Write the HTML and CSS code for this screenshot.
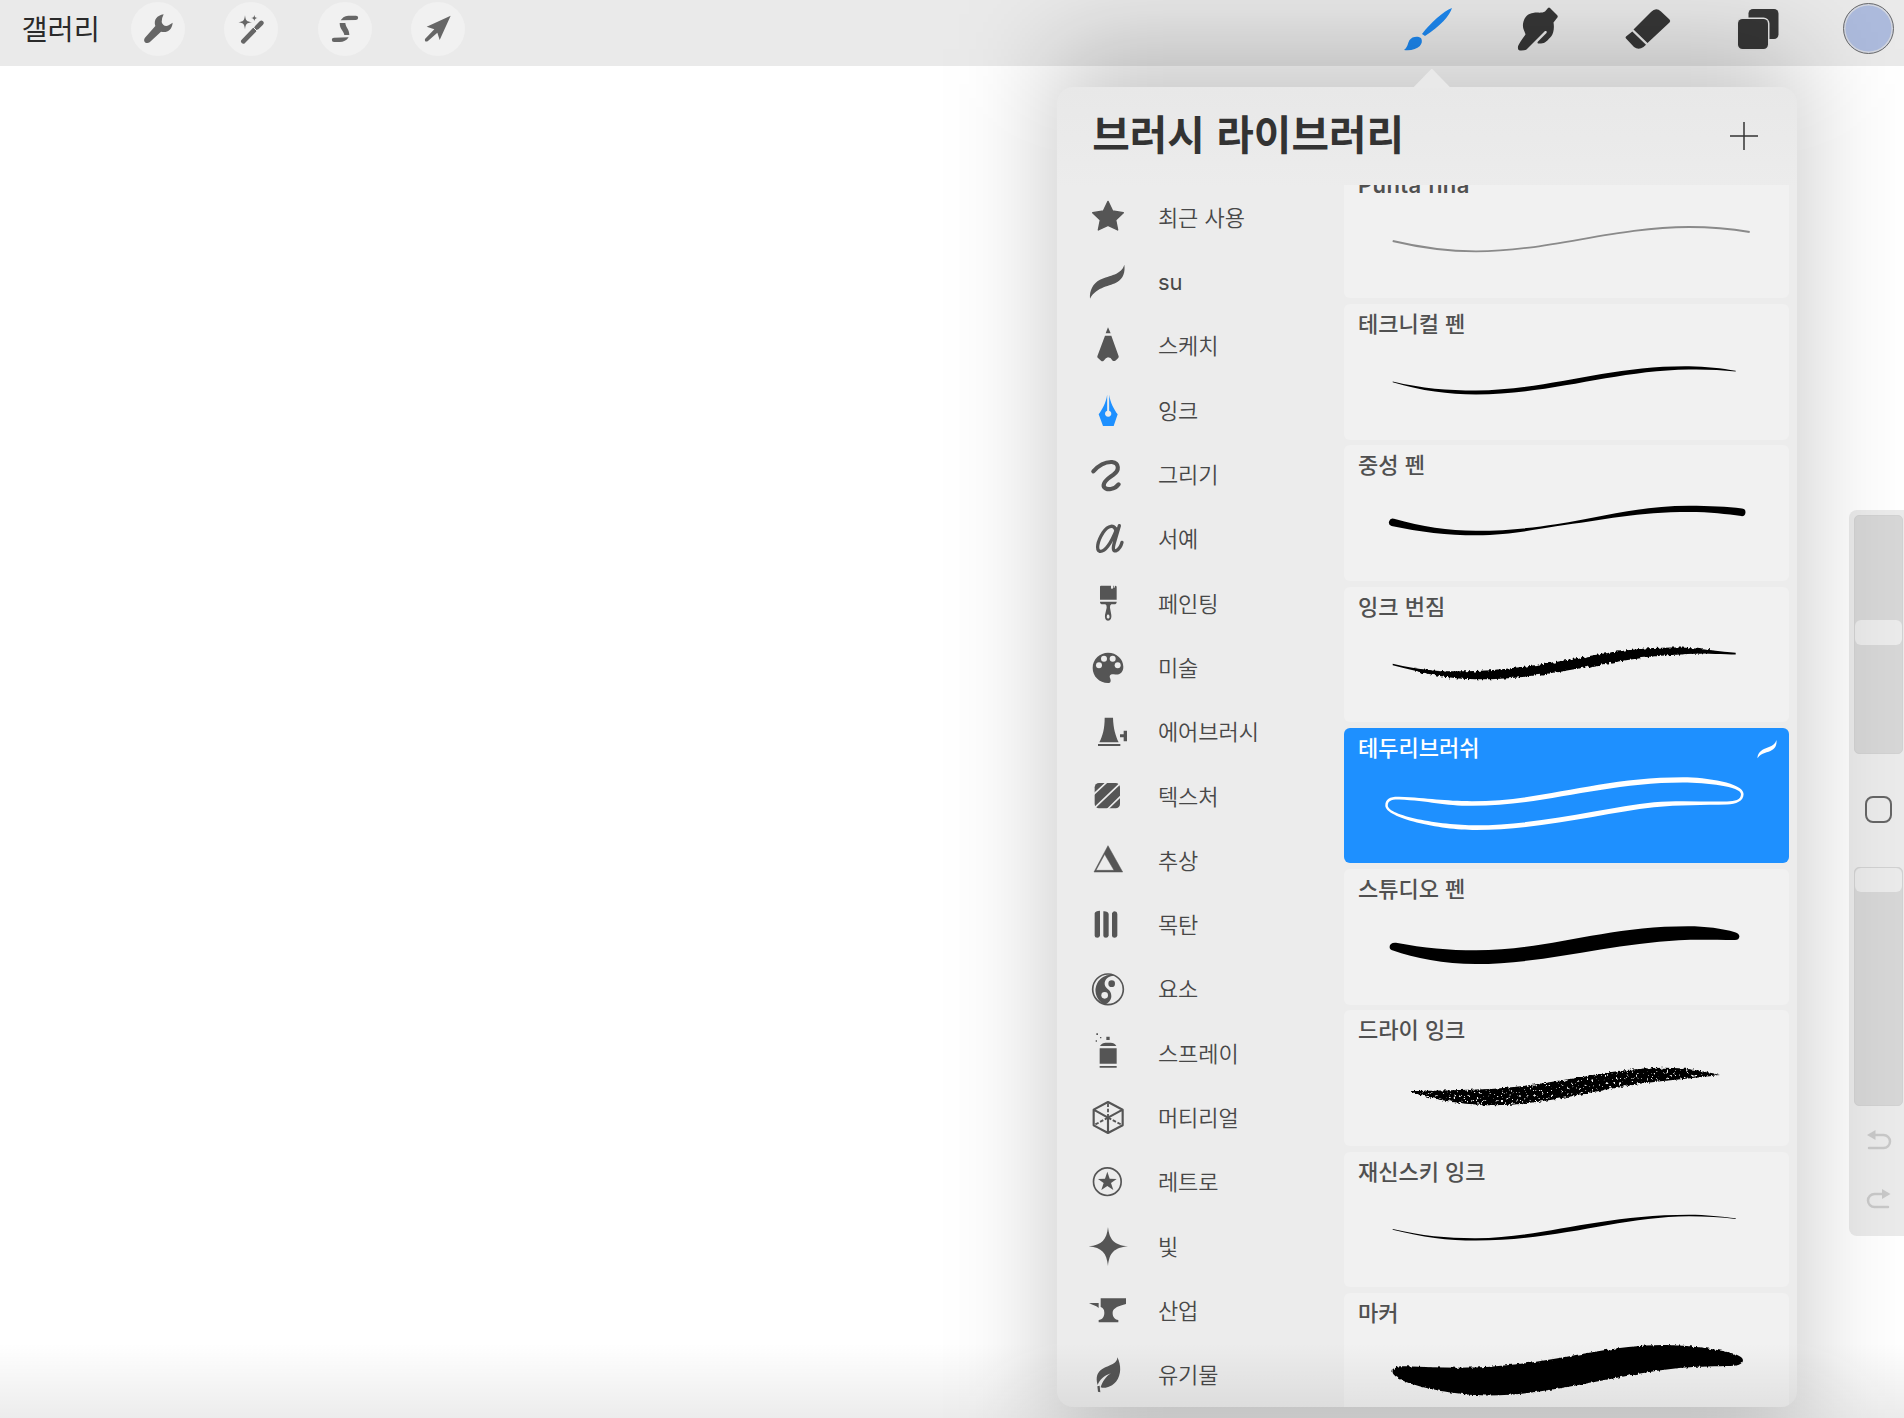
FILE: index.html
```html
<!DOCTYPE html>
<html lang="ko">
<head>
<meta charset="utf-8">
<title>브러시 라이브러리</title>
<link rel="stylesheet" href="styles.css">
</head>
<body>
<div class="app">
  <header class="topbar">
    <span class="gallery">갤러리</span>
    <nav class="actions">
      <span class="round"><svg viewBox="392 6 162 162"><path d="M490 43C470 46 459 60 465 78L434 113C426 124 438 134 448 127L482 95C500 100 515 90 517 68L505 76C495 81 486 75 484 66Q484 54 490 43Z"/></svg></span>
      <span class="round"><svg viewBox="674 6 162 162"><path d="M737 46C739 62 742 65 758 67C742 69 739 72 737 88C735 72 732 69 717 67C732 65 735 62 737 46ZM765 44C766 51 768 53 775 54C768 55 766 57 765 64C764 57 762 55 755 54C762 53 764 51 765 44Z"/><path class="wand" d="M786 69L773 82M765 90L732 124"/><path class="notch" d="M762 82L774 94"/></svg></span>
      <span class="round"><svg viewBox="953 6 162 162"><path d="M1021 61C1028 50 1036 47 1048 47H1067A6.5 6.5 0 0 1 1067 60ZM1018 69H1035C1036 82 1047 88 1047 105H1032C1030 92 1018 88 1018 69ZM1045 112C1038 122 1030 126 1018 126H1001A6.5 6.5 0 0 1 1001 113Z"/></svg></span>
      <span class="round"><svg viewBox="1234 6 162 162"><path d="M1353 47L1320 120L1313 98L1284 124Q1274 127 1276 117L1304 88L1281 80Z"/></svg></span>
    </nav>
    <nav class="tools">
      <svg class="active" viewBox="1397.5 0 60 66"><path d="M1451.500 8C1449 16 1440 26 1424.500 36L1421.500 34C1430 23 1443 11 1451.500 8ZM1420.500 38C1424 44 1417 51.500 1403.500 50C1409 46 1406 41 1412 37.500C1415 36.300 1418 36.300 1420.500 38Z"/></svg>
      <svg viewBox="1508 0 60 66"><path d="M1548 8Q1549 7 1550 8L1557 15Q1558.500 16.500 1557 18L1553.500 22.500C1554.500 28 1553.500 33 1551.500 36C1548 40 1545 43.500 1541 43.500Q1536 44 1538 41.500L1546.500 33Q1547.500 30.500 1545 31L1526.500 49.500Q1525 50.700 1520 50.500Q1517.500 50.500 1518 46.500Q1518.500 44 1525.500 34.500C1524.500 30 1522.500 29 1523 24C1524 17 1528 13.500 1533 13C1537 12 1542 13.500 1545 11.500Z"/></svg>
      <svg viewBox="1618 0 60 66"><path d="M1633.500 29.500L1651 12Q1656 7 1661 11.500L1669.500 19.500Q1671 21 1669.500 22.500L1647.500 43ZM1632.300 31.500L1646 44.700L1643.500 47Q1638.500 50.500 1634 47L1626 38.500Q1625 37.500 1626 36.500Z"/></svg>
      <svg viewBox="1728 0 60 66"><rect x="1748.500" y="9" width="30" height="30" rx="4.500"/><rect class="front" x="1738" y="19" width="30" height="30" rx="4.500"/></svg>
      <span class="color"><i class="swatch"></i></span>
    </nav>
  </header>

  <aside class="sidebar">
    <div class="slider slider-size"><i class="thumb"></i></div>
    <i class="modify"></i>
    <div class="slider"><i class="thumb"></i></div>
    <svg class="history" viewBox="0 0 26 22"><path class="line" d="M8 6H17.500A6.300 6.300 0 0 1 17.500 19H3"/><path d="M1 6L9.500 1V11Z"/></svg>
    <svg class="history" viewBox="0 0 26 22"><path class="line" d="M17 6H8.500A6.300 6.300 0 0 0 8.500 19H22"/><path d="M24.500 6L16 1V11Z"/></svg>
  </aside>

  <section class="popover">
    <div class="panel">
      <div class="panel-head">
        <h1>브러시 라이브러리</h1>
        <svg class="plus" viewBox="0 0 28 28"><path d="M0 14H28M14 0V28"/></svg>
      </div>
      <div class="panel-body">
        <ul class="sets">
          <li><svg viewBox="112 352 120 120"><path class="soft" d="M172 365L186 394L218 399L195 421L201 451L172 437L143 451L149 421L126 399L158 394Z"/></svg><span>최근 사용</span></li>
          <li><svg viewBox="112 545 120 120"><path d="M221 553C224 575 218 594 200 605C180 618 138 618 118 655C116 630 126 610 148 598C178 584 212 584 221 553Z"/></svg><span class="latin">su</span></li>
          <li><svg viewBox="112 738 120 120"><path d="M172 742L180 760H165ZM163 767H182L204 829Q205 832 202 835L194 842Q190 844 186 842Q180 832 172 832Q166 833 159 842Q155 845 151 842L142 834Q139 832 140 829Z"/></svg><span>스케치</span></li>
          <li class="current"><svg viewBox="112 31 120 120"><path d="M169.500 45C166 70 155 88 144 104L157 139H189L201 104C190 88 179 70 175.500 45V93A9.500 9.500 0 1 1 169.500 93Z"/></svg><span>잉크</span></li>
          <li><svg viewBox="112 224 120 120"><path class="curl" d="M128 273C145 254 165 244 184 245C206 248 207 270 188 283C168 296 154 308 160 320C168 331 192 328 204 312"/></svg><span>그리기</span></li>
          <li><svg viewBox="112 417 120 120"><path class="script" d="M196 455C193 431 172 435 157 458C140 485 136 509 147 514C163 517 182 488 198 447M206 437L191 488C185 509 189 515 197 512C206 507 211 499 214 487"/></svg><span>서예</span></li>
          <li><svg viewBox="112 610 120 120"><path d="M151 618H181V625Q184 631 187 625V618H189V625Q192 627 193 618Q198 618 198 622V660H148V621Q148 618 151 618ZM148 666H198Q198 674 190 674H182Q177 676 178 684L182 706Q184 722 172 723Q161 722 163 706L168 684Q169 676 164 674H156Q148 674 148 666ZM172 704Q168 706 168 713Q172 721 177 713Q177 706 172 704Z" fill-rule="evenodd"/></svg><span>페인팅</span></li>
          <li><svg viewBox="112 802 120 120"><path d="M172 819C198 819 218 838 218 861C218 880 205 887 190 884C177 883 175 890 179 897C182 907 178 910 172 910C146 910 126 890 126 865C126 838 148 819 172 819Z"/><g class="hole"><circle cx="145" cy="857" r="9"/><circle cx="160" cy="837" r="9"/><circle cx="186" cy="837" r="9"/><circle cx="201" cy="857" r="9"/></g></svg><span>미술</span></li>
          <li><svg viewBox="112 35 120 120"><path d="M162 52H187C188 85 195 106 204 126H146C156 106 162 85 162 52ZM142 131H209V137H142ZM208 102H219V91H229V123H219V111H208Z"/></svg><span>에어브러시</span></li>
          <li><svg viewBox="112 228 120 120"><rect x="132" y="249" width="76" height="76" rx="13"/><path class="gap" d="M128 284L170 245M130 325L212 247M168 330L212 287"/></svg><span>텍스처</span></li>
          <li><svg viewBox="112 421 120 120"><path class="tri" fill-rule="evenodd" d="M172 438L216 517H130ZM162 464L136 512H190Z"/></svg><span>추상</span></li>
          <li><svg viewBox="112 614 120 120"><path d="M132 639Q134 631 148 631V706Q146 712 140 712Q132 712 132 706ZM158 633Q172 632 174 641V706Q172 712 166 712Q158 712 158 706ZM184 639Q187 633 192 633Q200 634 200 641V706Q198 712 192 712Q184 712 184 706Z"/></svg><span>목탄</span></li>
          <li><svg viewBox="112 807 120 120"><circle class="ring" cx="172" cy="868" r="46"/><path d="M190 827C173 828 161 838 162 853C164 868 182 868 182 888C182 900 174 909 162 914A47 47 0 0 1 190 825Z"/><circle cx="183" cy="851" r="10"/><circle class="hole" cx="162" cy="886" r="10"/></svg><span>요소</span></li>
          <li><svg viewBox="112 -20 120 120"><path d="M137-19H142V-14H137ZM135 2H139V6H135ZM148-8H152V-4H148ZM167-9H177V1H167ZM148 19Q155 9 165 9H180Q191 9 197 19ZM147 26H198V72H147ZM147 79H198V84H147Z"/></svg><span>스프레이</span></li>
          <li><svg viewBox="112 173 120 120"><path class="cube" d="M172 188L216 211V258L172 281L129 258V211ZM129 211L172 235L216 211M172 235V281"/><path class="cube dash" d="M172 235V188M172 235L129 258M172 235L216 258"/></svg><span>머티리얼</span></li>
          <li><svg viewBox="112 366 120 120"><circle class="ring" cx="170" cy="425" r="41.500"/><path d="M170 395L177 416L198 417L181 429L188 450L170 438L152 450L159 429L142 417L163 416Z"/></svg><span>레트로</span></li>
          <li><svg viewBox="112 559 120 120"><path d="M172 562C176 600 190 616 232 620C190 624 176 640 172 679C168 640 154 624 114 620C154 616 168 600 172 562Z"/></svg><span>빛</span></li>
          <li><svg viewBox="112 752 120 120"><path d="M150 777H226V794C205 799 188 806 186 818C185 832 192 841 203 842V849H144V842C155 841 161 832 161 820C161 810 157 806 150 803ZM115 791H144V806C137 799 128 798 115 791Z"/></svg><span>산업</span></li>
          <li><svg viewBox="112 944 120 120"><path d="M200 951C212 975 212 1003 197 1023C184 1039 165 1046 150 1041C155 1025 165 1009 181 999C160 1006 147 1018 141 1034C134 1010 140 994 156 985C178 974 200 970 200 951ZM140 1038L147 1036L149 1056L142 1054Z"/></svg><span>유기물</span></li>
        </ul>
        <ul class="brushes">
          <li><b class="latin">Punta fina</b><svg viewBox="0 0 445 136"><path class="fine" d="M48.700 78C78 85 104 88.300 132 88.300C205 88.300 270 64 345 64C366 64 388 66 405.700 69"/></svg></li>
          <li><b>테크니컬 펜</b><svg viewBox="0 0 445 136"><path d="M48.700 77.500C78 84.500 104 86.500 132 86.500C205 86 265 61.500 345 62.300C362 62.500 378 64.500 391.700 66.800V67.500C378 66 362 65.200 345 65.500C270 66.500 210 90 132 90.400C104 90.400 78 87 48.700 78.300Z"/></svg></li>
          <li><b>중성 펜</b><svg viewBox="0 0 445 136"><path d="M50 73.800C78 82 104 85.600 132 85.800C165 85.800 190 82.500 212 79.300C258 72 295 61 345 60.800C366 60.800 383 61.800 398 63.500A3.800 3.800 0 0 1 397.300 71.100C383 69 366 67 345 67C295 67 258 75 212 81.300C190 84.800 165 90 132 90.300C104 90.300 75 87 47.500 81A3.700 3.700 0 0 1 50 73.800Z"/></svg></li>
          <li><b>잉크 번짐</b><svg viewBox="0 0 445 136"><path d="M48.700 76.800C78 83.500 104 86 132 85.500C205 83.500 265 60 337 61.500C358 62 378 64.500 391.700 65.800V67.400C378 67.300 358 66 337 66.500C270 68 210 90.500 132 90.500C104 90.500 78 86 48.700 78.200Z"/><path filter="url(#bleed)" d="M70 81.500C90 84.500 110 84.700 132 84C205 82 265 58.500 337 60.500C350 61 365 63 375 64.800C362 66.600 350 66.500 337 67.500C270 70 210 92.500 132 92.300C108 92 88 88 70 83.500Z"/></svg></li>
          <li class="selected"><b>테두리브러쉬</b><svg viewBox="0 0 445 136"><path fill-rule="evenodd" d="M41.300 77.500C41.300 71 46 68.600 55 68.800C85 70 100 73.200 128 73.200C200 73.200 255 49.300 339 49.300C362 49.300 399.600 55 399.600 66C399.600 73.500 392 76 383 76.400C360 77 335 76.500 310 79.300C260 85 195 102 132 102C95 102 41.300 90 41.300 77.500ZM43.800 77.500C43.800 73 47 71.200 55 71.400C85 72.700 100 77.800 128 77.800C200 77.800 260 54.500 339 54.500C362 54.500 397 58.500 397 66C397 72 391 73.300 383 73.500C360 74 335 72.100 310 74.300C260 79.500 195 97.300 132 97.300C95 97.300 43.800 87.500 43.800 77.500Z"/><path d="M432.400 12C433 16.500 431.500 20 428 22C424 25 417.500 24 413.500 30.300C413.500 26 416 23 420 21C425 18.500 430.500 18.500 432.400 12Z"/></svg></li>
          <li><b>스튜디오 펜</b><svg viewBox="0 0 445 136"><path d="M45.600 78C45.600 75 48 73.300 52 73.700C80 79 105 81.300 132 81.300C205 81.300 260 57.300 344 57.300C362 57.300 378 59.500 391 63.200Q395.400 64.500 395.400 67.500Q395 71 391 71C370 71 353 70.300 335 71.300C265 75 200 95 132 95C100 95 70 89 49 81.500Q45.600 80.500 45.600 78Z"/></svg></li>
          <li><b>드라이 잉크</b><svg viewBox="0 0 445 136"><path filter="url(#dry)" d="M65 81C85 81 110 80 132 79.500C205 78 260 57.800 320 57.800C342 57.800 360 61 376 65C358 67 340 69 319 71C265 76 205 95 150 95.200C118 95.200 85 89 65 81Z"/></svg></li>
          <li><b>재신스키 잉크</b><svg viewBox="0 0 445 136"><path d="M48.700 77C78 84 104 86.300 132 86.200C200 85.500 255 62.800 345 62.700C362 62.700 378 64.500 391.700 66.300V67C378 65.300 362 64.300 345 64.300C275 65 215 88.600 132 88.600C104 88.600 78 85 48.700 77.700Z"/></svg></li>
          <li><b>마커</b><svg viewBox="0 0 445 136"><path filter="url(#marker)" d="M48.500 78.500C48.500 74 53 72.800 62 73.200C85 74.300 105 75 132 74.500C205 72 260 52 319 52C345 52 399 58 399 67C399 72 392 73 383 73C365 73.500 350 73.500 335 75C270 82 205 102.500 145 102.500C105 102.500 48.500 90 48.500 78.500Z"/></svg></li>
        </ul>
      </div>
    </div>
  </section>
  <div class="bottom-shade"></div>
</div>

<svg class="defs" width="0" height="0">
  <filter id="bleed" x="-5%" y="-30%" width="110%" height="160%">
    <feTurbulence type="fractalNoise" baseFrequency="0.4 0.12" numOctaves="2" seed="4"/>
    <feDisplacementMap in="SourceGraphic" scale="5" xChannelSelector="R" yChannelSelector="G"/>
    <feGaussianBlur stdDeviation="0.35"/>
  </filter>
  <filter id="marker" x="-5%" y="-30%" width="110%" height="160%">
    <feTurbulence type="fractalNoise" baseFrequency="0.35 0.15" numOctaves="2" seed="9"/>
    <feDisplacementMap in="SourceGraphic" scale="3.5" xChannelSelector="R" yChannelSelector="G"/>
    <feGaussianBlur stdDeviation="0.5"/>
  </filter>
  <filter id="dry" x="-5%" y="-30%" width="110%" height="160%">
    <feTurbulence type="fractalNoise" baseFrequency="0.4" numOctaves="2" seed="3" result="n"/>
    <feDisplacementMap in="SourceGraphic" in2="n" scale="4" xChannelSelector="R" yChannelSelector="G" result="d"/>
    <feColorMatrix in="n" type="matrix" values="0 0 0 0 0 0 0 0 0 0 0 0 0 0 0 0 0 8 0 -1.9" result="m"/>
    <feComposite in="d" in2="m" operator="in"/>
    <feGaussianBlur stdDeviation="0.3"/>
  </filter>
</svg>
</body>
</html>
```

FILE: styles.css
```css
* { box-sizing: border-box; }

body {
  margin: 0;
  background: #fff;
  font-family: "Noto Sans CJK KR", "Noto Sans", sans-serif;
}

.app {
  position: relative;
  width: 1904px;
  height: 1418px;
  overflow: hidden;
}

.defs { position: absolute; }

.latin { font-family: Inter, "Liberation Sans", sans-serif; }

/* top bar */
.topbar {
  display: flex;
  height: 66px;
  padding: 0 6px 0 21.500px;
  background: #eaeaea;
}

.gallery {
  width: 109.500px;
  line-height: 55px;
  font-size: 28.400px;
  color: #2a2a2a;
}

.actions {
  display: flex;
  gap: 39.400px;
  padding-top: 1.700px;
}

.round {
  width: 54px;
  height: 54px;
  border-radius: 50%;
  background: #f1f1f1;
}

.round svg {
  display: block;
  width: 54px;
  height: 54px;
  fill: #666;
}

.wand {
  fill: none;
  stroke: #666;
  stroke-width: 14;
  stroke-linecap: round;
}

.notch { stroke: #f1f1f1; stroke-width: 3; }

.tools {
  display: flex;
  gap: 50px;
  margin-left: auto;
}

.tools svg { width: 60px; height: 66px; fill: #373737; }
.tools .active { fill: #1d88f0; }
.front { stroke: #e6e6e6; stroke-width: 3; paint-order: stroke; }

.color { width: 60px; padding: 3px 4.500px; }

.swatch {
  display: block;
  width: 51px;
  height: 51px;
  border: 1.500px solid #6c6c6c;
  border-radius: 50%;
  background: #adbbdd;
  box-shadow: inset 0 0 0 1.500px #d4d7df;
}

/* sliders on the right edge */
.sidebar {
  position: absolute;
  top: 510px;
  right: 0;
  width: 54.700px;
  height: 726px;
  padding: 5px 1px 0 5px;
  display: flex;
  flex-direction: column;
  align-items: center;
  border-radius: 8px 0 0 8px;
  background: #ebebeb;
}

.slider {
  width: 49px;
  height: 239px;
  border: 1px solid #d2d2d2;
  border-radius: 5px;
  background: #d7d7d7;
}

.slider-size { padding-top: 104px; }

.thumb {
  display: block;
  height: 24.500px;
  border-radius: 6px;
  background: #ebebeb;
}

.modify {
  width: 27px;
  height: 27px;
  margin: 42px 0 43.500px;
  border: 2.500px solid #666;
  border-radius: 8px;
}

.history {
  width: 26px;
  height: 22px;
  margin-top: 23.500px;
  fill: #c9c9c9;
}

.history + .history { margin-top: 37px; }
.line { fill: none; stroke: #c9c9c9; stroke-width: 2.500; stroke-linecap: round; }

/* brush library */
.popover {
  position: absolute;
  z-index: 0;
  top: 87px;
  left: 1057.300px;
  width: 740px;
  height: 1320px;
}

.popover::before {
  content: "";
  position: absolute;
  top: -18.500px;
  left: 356px;
  width: 37px;
  height: 19px;
  background: #e9e9e9;
  clip-path: polygon(50% 0, 100% 100%, 0 100%);
}

.popover::after {
  content: "";
  position: absolute;
  z-index: -1;
  inset: -38px -4px;
  background: rgba(0, 0, 0, 0.22);
  filter: blur(52px);
}

.panel {
  display: flex;
  flex-direction: column;
  height: 100%;
  border-radius: 16px;
  overflow: hidden;
  background: linear-gradient(#e8e8e8, #ececec 100px);
}

.panel-head {
  display: flex;
  justify-content: space-between;
  height: 97.500px;
  padding: 0 39.500px 0 35px;
}

h1 {
  margin: 0;
  font-size: 40.800px;
  font-weight: 600;
  line-height: 91px;
  color: #333;
}

.plus {
  width: 28px;
  height: 28px;
  margin-top: 35px;
  stroke: #333;
  stroke-width: 1.500;
}

.panel-body {
  display: flex;
  flex: 1;
  min-height: 0;
  justify-content: space-between;
  padding-right: 8.300px;
}

ul { margin: 0; padding: 0; list-style: none; }

.sets { padding: 0.700px 0 0 30.400px; }

.sets li {
  display: flex;
  align-items: center;
  gap: 30.200px;
  height: 64.300px;
  font-size: 22px;
  font-weight: 350;
  color: #484848;
}

.sets span { padding-bottom: 3px; }
.sets .latin { padding-bottom: 0; font-weight: 400; }

.sets svg { width: 40px; height: 40px; fill: #555; overflow: visible; }
.sets .current svg { fill: #1e90ff; }
.sets .soft { stroke: #555; stroke-width: 4; stroke-linejoin: round; }
.sets .tri { stroke: #555; stroke-width: 1.500; stroke-linejoin: round; }
.sets .curl { fill: none; stroke: #555; stroke-width: 12.500; stroke-linecap: round; }
.sets .script { fill: none; stroke: #555; stroke-width: 10; stroke-linecap: round; }
.sets .hole { fill: #ececec; }
.sets .gap { fill: none; stroke: #ececec; stroke-width: 5; }
.sets .ring { fill: none; stroke: #555; stroke-width: 5; }
.sets .cube { fill: none; stroke: #555; stroke-width: 6.500; stroke-linejoin: round; }
.sets .dash { stroke-dasharray: 11 5; stroke-width: 5.500; }

.brushes {
  display: flex;
  flex-direction: column;
  gap: 5.700px;
  width: 445px;
  overflow: hidden;
}

.brushes li {
  display: grid;
  flex: none;
  height: 135.600px;
  border-radius: 6px;
  background: #f1f1f1;
  color: #505050;
}

.brushes li:first-child { margin-top: -21.800px; }

.brushes li > * { grid-area: 1 / 1; }

.brushes b {
  padding-left: 14px;
  font-size: 22px;
  font-weight: 500;
  line-height: 37px;
}

.brushes .latin { font-weight: 600; line-height: 44px; letter-spacing: 0.400px; }

.brushes svg { width: 445px; height: 136px; }
.brushes .fine { fill: none; stroke: #8a8a8a; stroke-width: 1.800; }
.brushes .selected { background: #1e90ff; color: #fff; }
.selected svg { fill: #fff; }

.bottom-shade {
  position: absolute;
  inset: auto 0 0;
  height: 75px;
  background: linear-gradient(rgba(0, 0, 0, 0), rgba(0, 0, 0, 0.075));
}
```
